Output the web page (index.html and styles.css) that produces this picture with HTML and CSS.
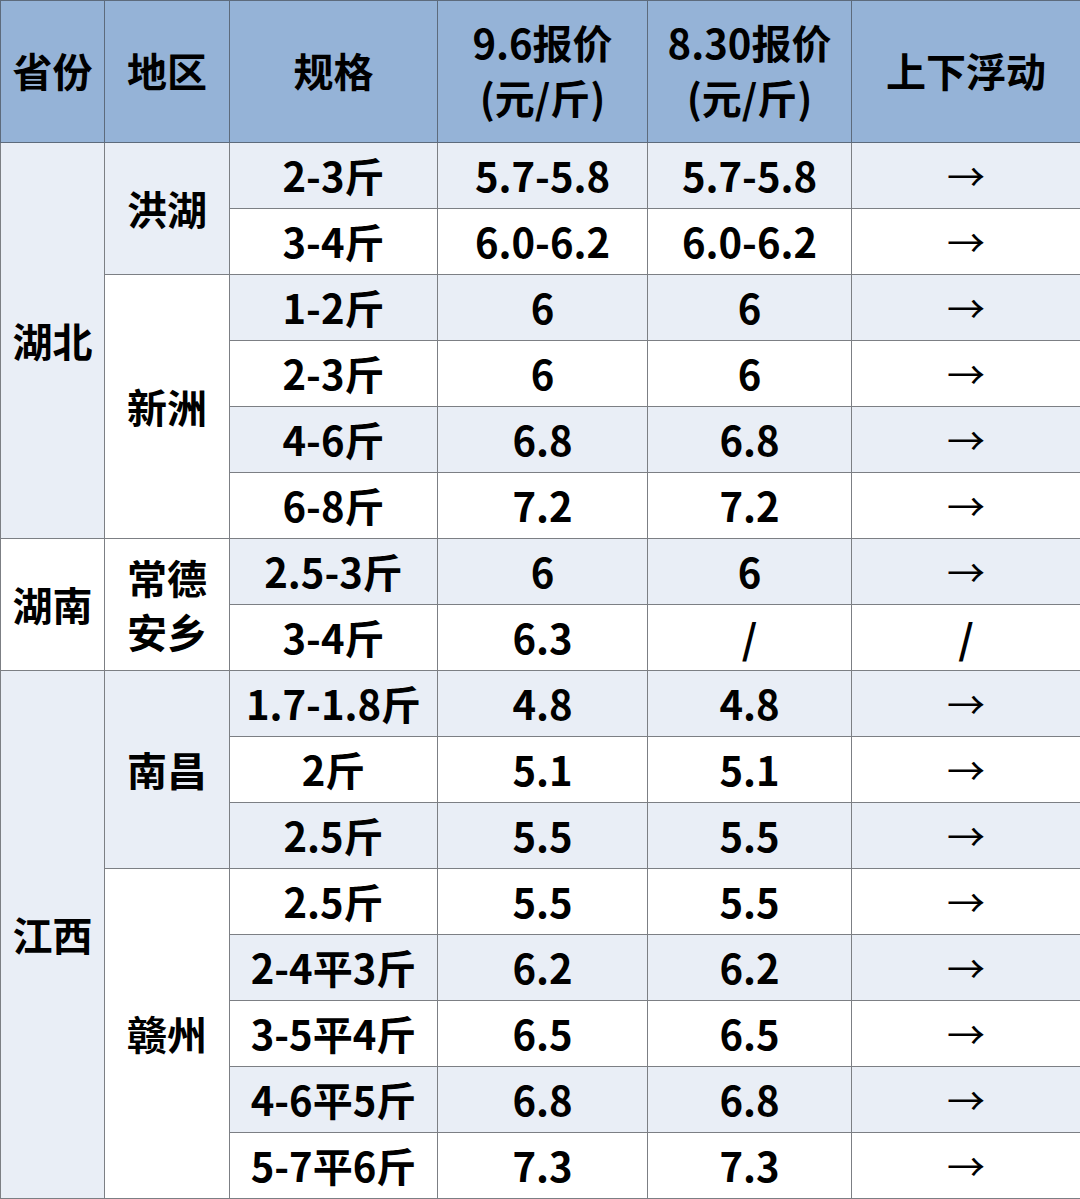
FILE: index.html
```html
<!DOCTYPE html>
<html lang="zh">
<head>
<meta charset="utf-8">
<link rel="stylesheet" href="styles.css">
</head>
<body>
<table class="price">
  <colgroup>
    <col class="c1"><col class="c2"><col class="c3"><col class="c4"><col class="c5"><col class="c6">
  </colgroup>
  <thead>
    <tr>
      <th>省份</th><th>地区</th><th>规格</th>
      <th>9.6报价<br>(元/斤)</th><th>8.30报价<br>(元/斤)</th><th>上下浮动</th>
    </tr>
  </thead>
  <tbody>
    <tr class="alt">
      <td rowspan="6" class="alt">湖北</td><td rowspan="2" class="alt">洪湖</td>
      <td>2-3斤</td><td>5.7-5.8</td><td>5.7-5.8</td><td class="arr">→</td>
    </tr>
    <tr><td>3-4斤</td><td>6.0-6.2</td><td>6.0-6.2</td><td class="arr">→</td></tr>
    <tr class="alt">
      <td rowspan="4" class="white">新洲</td>
      <td>1-2斤</td><td>6</td><td>6</td><td class="arr">→</td>
    </tr>
    <tr><td>2-3斤</td><td>6</td><td>6</td><td class="arr">→</td></tr>
    <tr class="alt"><td>4-6斤</td><td>6.8</td><td>6.8</td><td class="arr">→</td></tr>
    <tr><td>6-8斤</td><td>7.2</td><td>7.2</td><td class="arr">→</td></tr>
    <tr class="alt">
      <td rowspan="2" class="white">湖南</td><td rowspan="2" class="white two">常德<br>安乡</td>
      <td>2.5-3斤</td><td>6</td><td>6</td><td class="arr">→</td>
    </tr>
    <tr><td>3-4斤</td><td>6.3</td><td>/</td><td>/</td></tr>
    <tr class="alt">
      <td rowspan="8" class="alt">江西</td><td rowspan="3" class="alt">南昌</td>
      <td>1.7-1.8斤</td><td>4.8</td><td>4.8</td><td class="arr">→</td>
    </tr>
    <tr><td>2斤</td><td>5.1</td><td>5.1</td><td class="arr">→</td></tr>
    <tr class="alt"><td>2.5斤</td><td>5.5</td><td>5.5</td><td class="arr">→</td></tr>
    <tr>
      <td rowspan="5" class="white">赣州</td>
      <td>2.5斤</td><td>5.5</td><td>5.5</td><td class="arr">→</td>
    </tr>
    <tr class="alt"><td>2-4平3斤</td><td>6.2</td><td>6.2</td><td class="arr">→</td></tr>
    <tr><td>3-5平4斤</td><td>6.5</td><td>6.5</td><td class="arr">→</td></tr>
    <tr class="alt"><td>4-6平5斤</td><td>6.8</td><td>6.8</td><td class="arr">→</td></tr>
    <tr><td>5-7平6斤</td><td>7.3</td><td>7.3</td><td class="arr">→</td></tr>
  </tbody>
</table>
</body>
</html>
```
FILE: styles.css
```css
html, body {
  margin: 0;
  padding: 0;
  background: #ffffff;
}
.price {
  width: 1080px;
  border-collapse: collapse;
  table-layout: fixed;
  font-family: "Noto Sans CJK SC", "Noto Sans", sans-serif;
  font-weight: 700;
  color: #000;
}
.c1 { width: 104px; }
.c2 { width: 125px; }
.c3 { width: 208px; }
.c4 { width: 210px; }
.c5 { width: 204px; }
.c6 { width: 229px; }
.price th, .price td {
  border: 1px solid #7c7f84;
  text-align: center;
  vertical-align: middle;
  padding: 0;
}
.price th {
  background: #95b3d7;
  height: 138px;
  font-size: 40px;
  line-height: 55px;
  border-color: #5d6b7c;
  padding-bottom: 3px;
}
.price td {
  height: 63px;
  font-size: 40px;
  line-height: 44px;
  background: #ffffff;
  padding-bottom: 2px;
}
.price td.two {
  line-height: 54px;
}
.price tr.alt td { background: #e9eef6; }
.price tr td.alt { background: #e9eef6; }
.price tr td.white { background: #ffffff; }
.price td.arr {
  font-weight: 400;
  font-size: 38px;
}
.price tbody tr:first-child td { border-top-color: #5d6b7c; }
```
